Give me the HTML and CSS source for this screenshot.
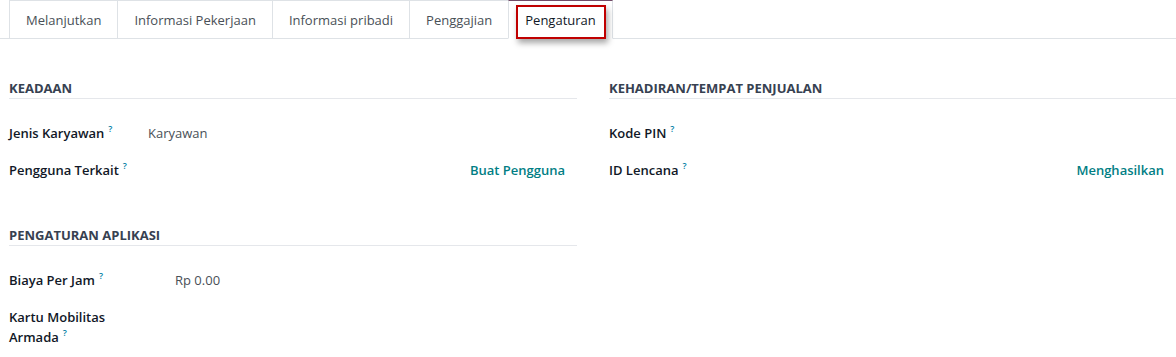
FILE: index.html
```html
<!DOCTYPE html>
<html lang="id">
<head>
    <meta charset="UTF-8">
    <meta name="viewport" content="width=device-width, initial-scale=1.0">
    <title>Karyawan - Pengaturan</title>
    <link rel="stylesheet" href="styles.css">
</head>
<body>
    <ul class="tabs">
        <li class="tab">Melanjutkan</li>
        <li class="tab">Informasi Pekerjaan</li>
        <li class="tab">Informasi pribadi</li>
        <li class="tab">Penggajian</li>
        <li class="tab active">Pengaturan</li>
    </ul>

    <div class="sheet">
        <div class="column">
            <div class="group">
                <h3 class="group-title">Keadaan</h3>
                <div class="fields status">
                    <div class="label">Jenis Karyawan<sup>?</sup></div>
                    <div class="value">Karyawan</div>
                    <div class="label">Pengguna Terkait<sup>?</sup></div>
                    <div class="value"><a class="action">Buat Pengguna</a></div>
                </div>
            </div>
            <div class="group">
                <h3 class="group-title">Pengaturan Aplikasi</h3>
                <div class="fields apps">
                    <div class="label">Biaya Per Jam<sup>?</sup></div>
                    <div class="value">Rp 0.00</div>
                    <div class="label">Kartu Mobilitas Armada<sup>?</sup></div>
                    <div class="value"></div>
                </div>
            </div>
        </div>

        <div class="column">
            <div class="group">
                <h3 class="group-title">Kehadiran/Tempat Penjualan</h3>
                <div class="fields attendance">
                    <div class="label">Kode PIN<sup>?</sup></div>
                    <div class="value"></div>
                    <div class="label">ID Lencana<sup>?</sup></div>
                    <div class="value"><a class="action">Menghasilkan</a></div>
                </div>
            </div>
        </div>
    </div>
</body>
</html>
```

FILE: styles.css
```css
body {
    font-family: 'Open Sans', 'Noto Sans', sans-serif;
    font-size: 13px;
    color: #111827;
    background-color: #fff;
    margin: 0;
}

.tabs {
    display: flex;
    list-style: none;
    margin: 0;
    padding: 0 0 0 9px;
    border-bottom: 1px solid #dee2e6;
}

.tab {
    padding: 10px 16px 9px;
    line-height: 18px;
    color: #495057;
    border: 1px solid #dee2e6;
    border-right: none;
    border-bottom: none;
    margin-bottom: -1px;
}

.tab.active {
    position: relative;
    color: #111827;
    background-color: #fff;
    border-top-color: #714b67;
    border-right: 1px solid #dee2e6;
    border-bottom: 1px solid #fff;
}

/* highlight box drawn over the active tab */
.tab.active::after {
    content: "";
    position: absolute;
    left: 7px;
    right: 6px;
    top: 4px;
    bottom: -1px;
    border: 2px solid #c00000;
    box-shadow: 2px 4px 6px rgba(0, 0, 0, 0.35);
}

.sheet {
    display: grid;
    grid-template-columns: 568px 1fr;
    column-gap: 32px;
    padding: 0 0 0 9px;
    margin-top: 40px;
}

.group {
    margin-bottom: 46px;
}

.group:last-child {
    margin-bottom: 0;
}

.group-title {
    margin: 0 0 22px;
    padding-bottom: 1px;
    font-size: 13px;
    font-weight: 700;
    text-transform: uppercase;
    color: #374151;
    border-bottom: 1px solid #e5e7eb;
}

.fields {
    display: grid;
    row-gap: 15px;
    align-items: start;
}

.fields.status {
    grid-template-columns: 139px 1fr;
}

.fields.apps {
    grid-template-columns: 166px 1fr;
}

.fields.attendance {
    grid-template-columns: 139px 1fr;
}

.label {
    font-weight: 600;
    line-height: 20px;
    padding-top: 2px;
}

.apps .label {
    width: 110px;
}

.value {
    line-height: 20px;
    padding: 2px 12px 0 0;
    color: #495057;
    min-height: 20px;
}

sup {
    position: relative;
    top: -6px;
    vertical-align: baseline;
    line-height: 0;
    margin-left: 4px;
    font-size: 9px;
    font-weight: 600;
    color: #0180a5;
}

.action {
    display: block;
    text-align: right;
    font-weight: 600;
    color: #017e84;
    cursor: pointer;
}
```
